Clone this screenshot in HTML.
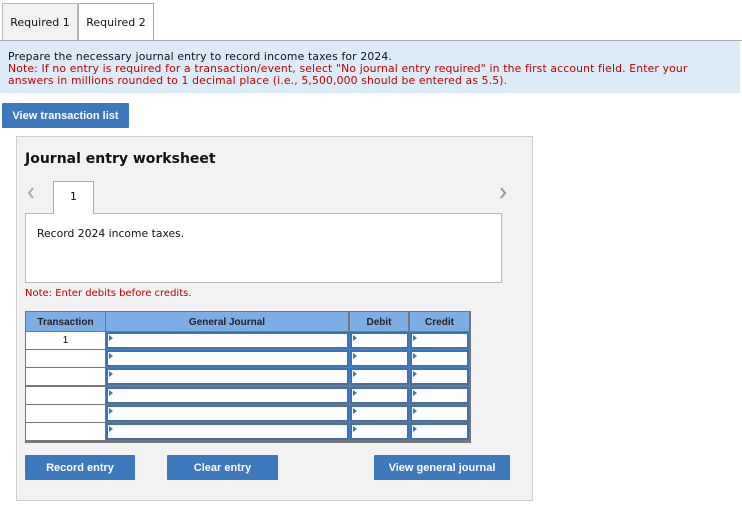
<!DOCTYPE html>
<html><head><style>
body{margin:0;width:742px;height:514px;background:#fff;font-family:"DejaVu Sans","Liberation Sans",sans-serif;position:relative;overflow:hidden}
.a{position:absolute;box-sizing:border-box}
.tab{top:3px;height:38px;border:1px solid #bbb;border-bottom:none;font-size:11px;line-height:38px;text-align:center;color:#111}
.btn{background:#3b78be;color:#fff;font-family:"Liberation Sans",sans-serif;font-weight:bold;font-size:11px;text-align:center;line-height:27px;height:25px;border-radius:1px}
.red{color:#c00000}
.c{position:absolute;box-sizing:border-box}
.tri{position:absolute;width:0;height:0;border-top:3px solid transparent;border-bottom:3px solid transparent;border-left:4px solid #3b78be;top:1px;left:1px}
</style></head><body>
<div class="a tab" style="left:2px;width:76px;background:#f2f2f2">Required 1</div>
<div class="a tab" style="left:78px;width:76px;background:#fff;border-color:#aaa">Required 2</div>
<div class="a" style="left:0;top:40px;width:742px;height:1px;background:#aaa"></div>
<div class="a" style="left:0;top:41px;width:740px;height:52px;background:#dcebf8"></div>
<div class="a" style="left:8px;top:51px;width:695px;font-size:10.8px;letter-spacing:0.15px;line-height:12px;color:#111">Prepare the necessary journal entry to record income taxes for 2024.<br><span class="red">Note: If no entry is required for a transaction/event, select "No journal entry required" in the first account field. Enter your answers in millions rounded to 1 decimal place (i.e., 5,500,000 should be entered as 5.5).</span></div>
<div class="a btn" style="left:2px;top:103px;width:127px">View transaction list</div>
<div class="a" style="left:16px;top:136px;width:517px;height:365px;background:#f2f2f2;border:1px solid #ccc"></div>
<div class="a" style="left:25px;top:151px;font-weight:bold;font-size:14px;color:#111">Journal entry worksheet</div>
<svg class="a" style="left:26px;top:186px" width="10" height="14"><path d="M7 2 L3 7 L7 12" stroke="#aaa" stroke-width="2" fill="none"/></svg>
<svg class="a" style="left:498px;top:186px" width="10" height="14"><path d="M3 2 L7 7 L3 12" stroke="#999" stroke-width="2" fill="none"/></svg>
<div class="a" style="left:25px;top:213px;width:477px;height:70px;background:#fff;border:1px solid #bbb;font-size:10.8px;padding:13px 0 0 11px;color:#111">Record 2024 income taxes.</div>
<div class="a" style="left:53px;top:181px;width:41px;height:33px;background:#fff;border:1px solid #aaa;border-bottom:none;font-size:10.5px;text-align:center;line-height:30px">1</div>
<div class="a red" style="left:25px;top:288px;font-size:10px">Note: Enter debits before credits.</div>
<div class="a" style="left:25px;top:311px;width:446px;height:132px;background:#777">
 <div class="c" style="left:1px;top:1px;width:79px;height:19px;background:#7aaee4;font:bold 10px 'Liberation Sans',sans-serif;text-align:center;line-height:21px;color:#222">Transaction</div>
 <div class="c" style="left:81px;top:1px;width:242px;height:19px;background:#7aaee4;font:bold 10px 'Liberation Sans',sans-serif;text-align:center;line-height:21px;color:#222">General Journal</div>
 <div class="c" style="left:325px;top:1px;width:58px;height:19px;background:#7aaee4;font:bold 10px 'Liberation Sans',sans-serif;text-align:center;line-height:21px;color:#222">Debit</div>
 <div class="c" style="left:385px;top:1px;width:59px;height:19px;background:#7aaee4;font:bold 10px 'Liberation Sans',sans-serif;text-align:center;line-height:21px;color:#222">Credit</div>
</div>
<div id="rows"></div>
<script>
var h='';for(var i=0;i<6;i++){var y=332+i*18.2;
h+='<div class="a" style="left:26px;top:'+y+'px;width:79px;height:17px;background:#fff;font:10px \'Liberation Sans\',sans-serif;text-align:center;line-height:17px">'+(i==0?'1':'')+'</div>';
[[106,243],[350,59],[410,59]].forEach(function(c){h+='<div class="a" style="left:'+c[0]+'px;top:'+y+'px;width:'+c[1]+'px;height:17px;background:#fff;border:2px solid #3b72b4"><div class="tri"></div></div>';});}
document.getElementById('rows').innerHTML=h;
</script>
<div class="a btn" style="left:25px;top:455px;width:110px">Record entry</div>
<div class="a btn" style="left:167px;top:455px;width:111px">Clear entry</div>
<div class="a btn" style="left:374px;top:455px;width:136px">View general journal</div>
</body></html>
